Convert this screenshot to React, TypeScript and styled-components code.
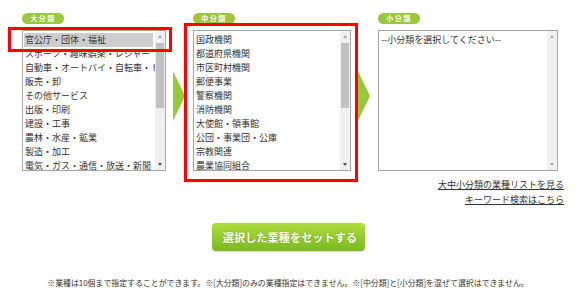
import React from 'react';
import styled, { createGlobalStyle } from 'styled-components';

const GlobalStyle = createGlobalStyle`
    html, body {
        margin: 0;
        padding: 0;
        background: #fff;
    }
    body {
        font-family: "Noto Sans CJK JP", "Noto Sans", sans-serif;
        color: #333;
    }
`;

const Page = styled.div`
    width: 576px;
    height: 304px;
    padding-top: 13px;
    box-sizing: border-box;
`;

const SelectorRow = styled.div`
    display: flex;
    align-items: flex-start;
    padding-left: 22px;
`;

const Column = styled.div<{ $width: number }>`
    width: ${(props) => props.$width}px;
    display: flex;
    flex-direction: column;
`;

const Label = styled.div`
    width: 42px;
    height: 11px;
    border-radius: 6px;
    background: #97c93d;
    color: #fff;
    font-size: 7px;
    font-weight: bold;
    line-height: 11px;
    text-align: center;
    letter-spacing: 1.5px;
    margin-bottom: 6px;
`;

const ListWrap = styled.div`
    position: relative;
`;

const ListBox = styled.div`
    height: 141px;
    border: 1px solid #a6a6a6;
    box-sizing: border-box;
    display: flex;
    overflow: hidden;
    background: #fff;
`;

const Items = styled.ul`
    flex: 1;
    min-width: 0;
    margin: 0;
    padding: 2px 0 0 1px;
    list-style: none;
    overflow: hidden;
`;

const Item = styled.li<{ $selected?: boolean }>`
    height: 14px;
    line-height: 14px;
    font-size: 9px;
    padding-left: 1px;
    margin-right: 2px;
    white-space: nowrap;
    color: #333;
    background: ${(props) => (props.$selected ? '#cdcdcd' : 'transparent')};
`;

const ScrollBar = styled.div`
    width: 10px;
    background: #f0f0f0;
    display: flex;
    flex-direction: column;
    align-items: center;
`;

const ScrollArrow = styled.div<{ $down?: boolean; $disabled?: boolean }>`
    height: 11px;
    width: 10px;
    display: flex;
    align-items: center;
    justify-content: center;
    &::before {
        content: '';
        border-left: 2.5px solid transparent;
        border-right: 2.5px solid transparent;
        ${(props) =>
            props.$down
                ? `border-top: 3px solid ${props.$disabled ? '#a3a3a3' : '#505050'};`
                : `border-bottom: 3px solid #a3a3a3;`}
    }
`;

const Track = styled.div`
    flex: 1;
    width: 100%;
    display: flex;
    justify-content: center;
    padding-top: 1px;
`;

const Thumb = styled.div<{ $height: number }>`
    width: 8px;
    height: ${(props) => props.$height}px;
    background: #c1c1c1;
`;

const Highlight = styled.div<{ $left: number; $top: number; $width: number; $height: number }>`
    position: absolute;
    left: ${(props) => props.$left}px;
    top: ${(props) => props.$top}px;
    width: ${(props) => props.$width}px;
    height: ${(props) => props.$height}px;
    border: 3px solid #f00;
    box-sizing: border-box;
    pointer-events: none;
`;

const Arrow = styled.svg`
    flex: none;
    margin: 58px 8px 0 7px;
`;

const Links = styled.div`
    display: flex;
    flex-direction: column;
    align-items: flex-end;
    padding-right: 12px;
    margin-top: 7px;
    gap: 1px;
`;

const TextLink = styled.a`
    font-size: 9px;
    line-height: 14px;
    color: #333;
    text-decoration: underline;
    cursor: pointer;
`;

const ButtonRow = styled.div`
    display: flex;
    justify-content: center;
    margin-top: 16px;
`;

const SetButton = styled.button`
    width: 153px;
    height: 28px;
    border: none;
    border-radius: 4px;
    background: linear-gradient(#aedd3e, #7cb920);
    box-shadow: 0 1px 1px rgba(0, 0, 0, 0.15);
    color: #fff;
    font-family: "Noto Sans CJK JP", sans-serif;
    font-size: 11px;
    font-weight: bold;
    letter-spacing: 0.2px;
    text-shadow: 0 0 2px rgba(60, 90, 0, 0.35);
    padding: 0 0 0 4px;
    cursor: pointer;
`;

const Note = styled.p`
    margin: 27px 0 0;
    text-align: center;
    font-size: 7.9px;
    line-height: 10px;
    color: #333;
    white-space: nowrap;
`;

const large = [
    '官公庁・団体・福祉',
    'スポーツ・趣味娯楽・レジャー',
    '自動車・オートバイ・自転車・ドライブ',
    '販売・卸',
    'その他サービス',
    '出版・印刷',
    '建設・工事',
    '農林・水産・鉱業',
    '製造・加工',
    '電気・ガス・通信・放送・新聞',
    '金融・保険',
];

const middle = [
    '国政機関',
    '都道府県機関',
    '市区町村機関',
    '郵便事業',
    '警察機関',
    '消防機関',
    '大使館・領事館',
    '公団・事業団・公庫',
    '宗教関連',
    '農業協同組合',
    '漁業協同組合',
];

const small = ['--小分類を選択してください--'];

interface IListProps {
    items: string[];
    selected?: number;
    thumb?: number;
}

function List({ items, selected, thumb }: IListProps) {
    return (
        <ListBox>
            <Items>
                {items.map((name, i) => (
                    <Item key={name} $selected={i === selected}>
                        {name}
                    </Item>
                ))}
            </Items>
            <ScrollBar>
                <ScrollArrow $disabled={!thumb} />
                <Track>{thumb ? <Thumb $height={thumb} /> : null}</Track>
                <ScrollArrow $down $disabled={!thumb} />
            </ScrollBar>
        </ListBox>
    );
}

function StepArrow() {
    return (
        <Arrow width="12" height="50" viewBox="0 0 12 50">
            <polygon points="0,0 12,25 0,50" fill="#97c93d" />
        </Arrow>
    );
}

function App() {
    return (
        <Page>
            <GlobalStyle />
            <SelectorRow>
                <Column $width={144}>
                    <Label>大分類</Label>
                    <ListWrap>
                        <List items={large} selected={0} thumb={65} />
                        <Highlight $left={-14} $top={-3} $width={164} $height={25} />
                    </ListWrap>
                </Column>
                <StepArrow />
                <Column $width={158}>
                    <Label>中分類</Label>
                    <ListWrap>
                        <List items={middle} thumb={65} />
                        <Highlight $left={-9} $top={-7} $width={174} $height={159} />
                    </ListWrap>
                </Column>
                <StepArrow />
                <Column $width={180}>
                    <Label>小分類</Label>
                    <ListWrap>
                        <List items={small} />
                    </ListWrap>
                </Column>
            </SelectorRow>
            <Links>
                <TextLink>大中小分類の業種リストを見る</TextLink>
                <TextLink>キーワード検索はこちら</TextLink>
            </Links>
            <ButtonRow>
                <SetButton>選択した業種をセットする</SetButton>
            </ButtonRow>
            <Note>
                ※業種は10個まで指定することができます。※[大分類]のみの業種指定はできません。※[中分類]と[小分類]を混ぜて選択はできません。
            </Note>
        </Page>
    );
}

export default App;
